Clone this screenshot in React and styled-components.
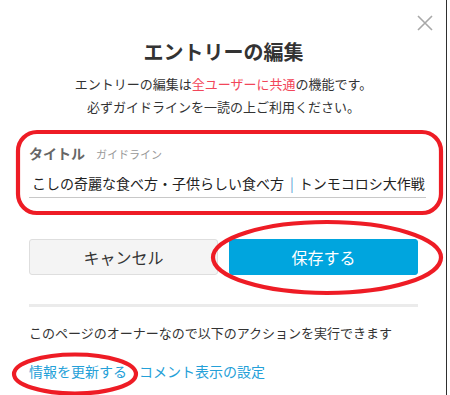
import React from "react";
import styled, { createGlobalStyle } from "styled-components";

const Global = createGlobalStyle`
  html, body { margin: 0; padding: 0; background: #fff; }
  body {
    font-family: "Noto Sans CJK JP", "Noto Sans", sans-serif;
    color: #333;
  }
  * { box-sizing: border-box; }
`;

const Frame = styled.div`
  position: relative;
  width: 450px;
  height: 395px;
  overflow: hidden;
  background: #fff;
`;

const Dialog = styled.div`
  position: relative;
  width: 447px;
  height: 395px;
  border-right: 1px solid #2f2f2f;
  padding: 38px 28px 0 29px;
  display: flex;
  flex-direction: column;
`;

const Close = styled.button`
  position: absolute;
  top: 15px;
  left: 417px;
  width: 16px;
  height: 16px;
  padding: 0;
  border: 0;
  background: none;
  display: flex;
`;

const Heading = styled.h1`
  margin: 0;
  text-align: center;
  font-size: 20px;
  line-height: 28px;
  font-weight: 700;
  color: #333;
`;

const Lead = styled.p`
  margin: 6px 0 0;
  text-align: center;
  font-size: 13px;
  line-height: 23px;
  color: #333;
`;

const Em = styled.span`
  color: #f2465a;
`;

const Field = styled.div`
  margin: 25px -8px 0 0;
  display: flex;
  flex-direction: column;
  gap: 10px;
`;

const LabelRow = styled.div`
  display: flex;
  align-items: baseline;
  gap: 11px;
  height: 20px;
`;

const Label = styled.span`
  font-size: 14px;
  line-height: 20px;
  font-weight: 700;
  color: #666;
`;

const Guide = styled.span`
  font-size: 11px;
  line-height: 20px;
  color: #999;
`;

const Input = styled.div`
  padding: 0 0 4px 3px;
  border-bottom: 1px solid #c8c8c8;
  font-size: 14px;
  line-height: 20px;
  color: #222;
  white-space: nowrap;
  overflow: hidden;
`;

const Pipe = styled.span`
  color: #5a9fd6;
  margin: 0 5px 0 6px;
`;

const Buttons = styled.div`
  margin-top: 41px;
  display: grid;
  grid-template-columns: 1fr 1fr;
  gap: 11px;
`;

const Button = styled.button`
  height: 36px;
  border-radius: 3px;
  font-family: inherit;
  font-size: 16px;
  border: 1px solid ${(p) => (p.$primary ? "#00a5de" : "#dedede")};
  background: ${(p) => (p.$primary ? "#00a5de" : "#f4f4f4")};
  color: ${(p) => (p.$primary ? "#fff" : "#333")};
  padding: 0;
`;

const Rule = styled.hr`
  margin: 29px 0 0;
  border: 0;
  height: 3px;
  background: #ebebeb;
`;

const Note = styled.p`
  margin: 16px 0 0;
  font-size: 13px;
  line-height: 20px;
  color: #333;
`;

const Links = styled.div`
  margin-top: 18px;
  display: flex;
  gap: 12px;
`;

const Link = styled.a`
  font-size: 14px;
  line-height: 20px;
  color: #24a0d8;
  text-decoration: none;
`;

const Marks = styled.svg`
  position: absolute;
  left: 0;
  top: 0;
  pointer-events: none;
`;

export default function App() {
  return (
    <>
      <Global />
      <Frame>
        <Dialog>
          <Close aria-label="close">
            <svg width="16" height="16" viewBox="0 0 16 16">
              <path d="M1 1L15 15M15 1L1 15" stroke="#a8a8a8" strokeWidth="1.6" />
            </svg>
          </Close>
          <Heading>エントリーの編集</Heading>
          <Lead>
            エントリーの編集は<Em>全ユーザーに共通</Em>の機能です。
            <br />
            必ずガイドラインを一読の上ご利用ください。
          </Lead>
          <Field>
            <LabelRow>
              <Label>タイトル</Label>
              <Guide>ガイドライン</Guide>
            </LabelRow>
            <Input>
              こしの奇麗な食べ方・子供らしい食べ方<Pipe>|</Pipe>トンモコロシ大作戦
            </Input>
          </Field>
          <Buttons>
            <Button>キャンセル</Button>
            <Button $primary>保存する</Button>
          </Buttons>
          <Rule />
          <Note>このページのオーナーなので以下のアクションを実行できます</Note>
          <Links>
            <Link href="#">情報を更新する</Link>
            <Link href="#">コメント表示の設定</Link>
          </Links>
        </Dialog>
        <Marks width="450" height="395" viewBox="0 0 450 395">
          <g fill="none" stroke="#ee1c25" strokeWidth="4.2">
            <rect x="18" y="132" width="423" height="81" rx="19" ry="19" />
            <ellipse cx="327" cy="257.5" rx="114" ry="35.5" />
            <ellipse cx="75" cy="374" rx="61" ry="19.5" />
          </g>
        </Marks>
      </Frame>
    </>
  );
}
